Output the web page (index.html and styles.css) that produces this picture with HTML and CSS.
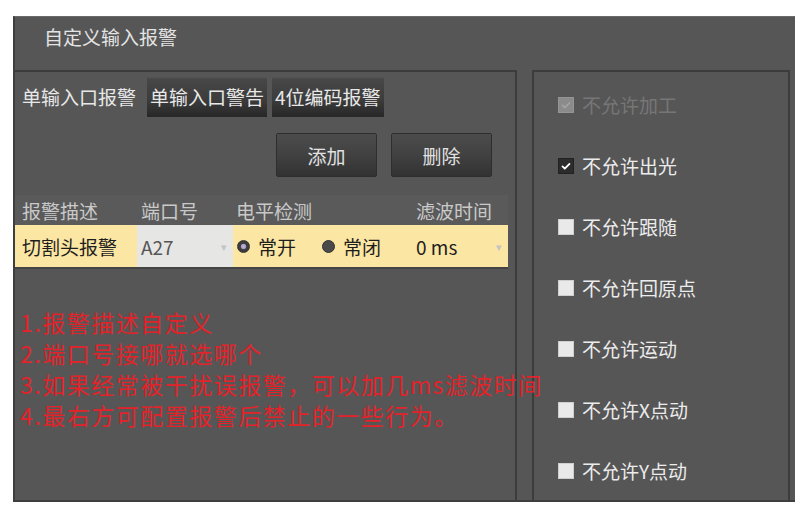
FILE: index.html
```html
<!DOCTYPE html>
<html lang="zh-CN">
<head>
<meta charset="utf-8">
<title>自定义输入报警</title>
<link rel="stylesheet" href="styles.css">
</head>
<body>
<div class="window">
  <div class="titlebar">自定义输入报警</div>
  <div class="content">
    <div class="left">
      <div class="tabs">
        <div class="tab active">单输入口报警</div>
        <div class="tab">单输入口警告</div>
        <div class="tab">4位编码报警</div>
      </div>
      <div class="actions">
        <button class="btn">添加</button>
        <button class="btn">删除</button>
      </div>
      <div class="table">
        <div class="thead">
          <div class="c1">报警描述</div>
          <div class="c2">端口号</div>
          <div class="c3">电平检测</div>
          <div class="c4">滤波时间</div>
        </div>
        <div class="trow">
          <div class="c1">切割头报警</div>
          <div class="c2 port"><span>A27</span><span class="arrow">▾</span></div>
          <div class="c3">
            <span class="radio on"></span><span class="rlabel">常开</span>
            <span class="radio"></span><span class="rlabel">常闭</span>
          </div>
          <div class="c4"><span>0 ms</span><span class="arrow">▾</span></div>
        </div>
      </div>
      <div class="notes">
        <div>1.报警描述自定义</div>
        <div>2.端口号接哪就选哪个</div>
        <div>3.如果经常被干扰误报警，可以加几ms滤波时间</div>
        <div>4.最右方可配置报警后禁止的一些行为。</div>
      </div>
    </div>
    <div class="right">
      <div class="opt disabled"><span class="box"><svg viewBox="0 0 16 16"><path d="M4 8.5l2.6 2.6L12 5.5"/></svg></span>不允许加工</div>
      <div class="opt checked"><span class="box"><svg viewBox="0 0 16 16"><path d="M4 8.5l2.6 2.6L12 5.5"/></svg></span>不允许出光</div>
      <div class="opt"><span class="box"></span>不允许跟随</div>
      <div class="opt"><span class="box"></span>不允许回原点</div>
      <div class="opt"><span class="box"></span>不允许运动</div>
      <div class="opt"><span class="box"></span>不允许X点动</div>
      <div class="opt"><span class="box"></span>不允许Y点动</div>
    </div>
  </div>
</div>
</body>
</html>
```
FILE: styles.css
```css
* { box-sizing: border-box; }
html, body { margin: 0; padding: 0; background: #ffffff; }
body {
  font-family: "Noto Sans CJK SC", "Noto Sans", sans-serif;
  width: 800px;
  height: 509px;
  overflow: hidden;
}
.window {
  margin: 16px 0 0 13px;
  width: 782px;
  height: 486px;
  background: #565656;
  border-left: 2px solid #3e3e3e;
  border-bottom: 2px solid #3e3e3e;
  border-top: 1px solid #6a6a6a;
  display: flex;
  flex-direction: column;
}
.titlebar {
  height: 53px;
  padding: 8px 0 0 29px;
  font-size: 19px;
  line-height: 24px;
  color: #e4e4e4;
}
.content {
  flex: 1;
  display: flex;
  gap: 15px;
  min-height: 0;
}
.left {
  width: 502px;
  border-top: 2px solid #3c3c3c;
  border-right: 2px solid #3c3c3c;
  position: relative;
}
.tabs {
  display: flex;
  margin-top: 4px;
  height: 41px;
  gap: 5px;
}
.tab {
  height: 41px;
  padding: 0 3px;
  font-size: 19px;
  line-height: 41px;
  color: #e8e8e8;
  background: linear-gradient(#5a5a5a 0, #474747 8%, #3b3b3b 60%, #272727 100%);
  white-space: nowrap;
}
.tab.active {
  background: none;
  padding: 0 5px 0 7px;
  margin-right: 1px;
}
.actions {
  display: flex;
  justify-content: flex-end;
  gap: 14px;
  margin-top: 16px;
  padding-right: 23px;
}
.btn {
  width: 101px;
  height: 44px;
  border: 1px solid #2e2e2e;
  border-radius: 2px;
  background: linear-gradient(#4c4c4c 0, #414141 50%, #323232 100%);
  color: #e2e2e2;
  font-family: inherit;
  font-size: 19px;
  padding: 0;
}
.table {
  margin-top: 18px;
  width: 493px;
}
.thead, .trow {
  display: flex;
  align-items: center;
  font-size: 19px;
}
.thead {
  height: 30px;
  color: #c9c9c9;
  background: #5a5a5a;
}
.trow {
  height: 42px;
  background: #fbe6a3;
  color: #1e1e1e;
  border-bottom: 2px solid #444;
  height: 44px;
}
.c1 { width: 122px; padding-left: 7px; }
.c2 { width: 96px; padding-left: 4px; }
.c3 { width: 177px; padding-left: 3px; display: flex; align-items: center; }
.c4 { width: 98px; padding-left: 6px; display: flex; align-items: center; justify-content: space-between; padding-right: 6px; }
.trow > div { height: 100%; display: flex; align-items: center; }
.trow .c2 {
  background: #e6e6e4;
  color: #555;
  justify-content: space-between;
  padding-right: 6px;
}
.arrow { color: #c4c4c4; font-size: 11px; }
.trow .c3 { padding-left: 4px; }
.radio {
  width: 13px;
  height: 13px;
  border-radius: 50%;
  background: #4a4a4a;
  border: 1px solid #333;
  margin-right: 8px;
  position: relative;
}
.radio.on {
  background: radial-gradient(circle, #c8b8dc 0, #a898c0 30%, #3c3c3c 40%);
}
.rlabel { margin-right: 26px; }
.notes {
  margin-top: 38px;
  padding-left: 5px;
  color: #e2232a;
  font-size: 23px;
  line-height: 31px;
  letter-spacing: 1.5px;
  white-space: nowrap;
  position: relative;
  z-index: 2;
}
.right {
  width: 258px;
  border: 2px solid #3c3c3c;
  border-bottom: none;
  padding: 2px 0 0 24px;
  overflow: hidden;
}
.opt {
  height: 61px;
  display: flex;
  align-items: center;
  gap: 8px;
  font-size: 19px;
  color: #ececec;
}
.box {
  width: 16px;
  height: 16px;
  background: #e9e9e9;
  border: 1px solid #cfcfcf;
  display: flex;
}
.box svg { width: 100%; height: 100%; }
.box path { fill: none; stroke-width: 2; stroke-linecap: round; stroke-linejoin: round; }
.opt.disabled { color: #767676; }
.opt.disabled .box { background: #8b8b8b; border-color: #959595; }
.opt.disabled .box path { stroke: #a2a2a2; }
.opt.checked .box { background: #2c2c2c; border-color: #222; }
.opt.checked .box path { stroke: #ffffff; }
```
